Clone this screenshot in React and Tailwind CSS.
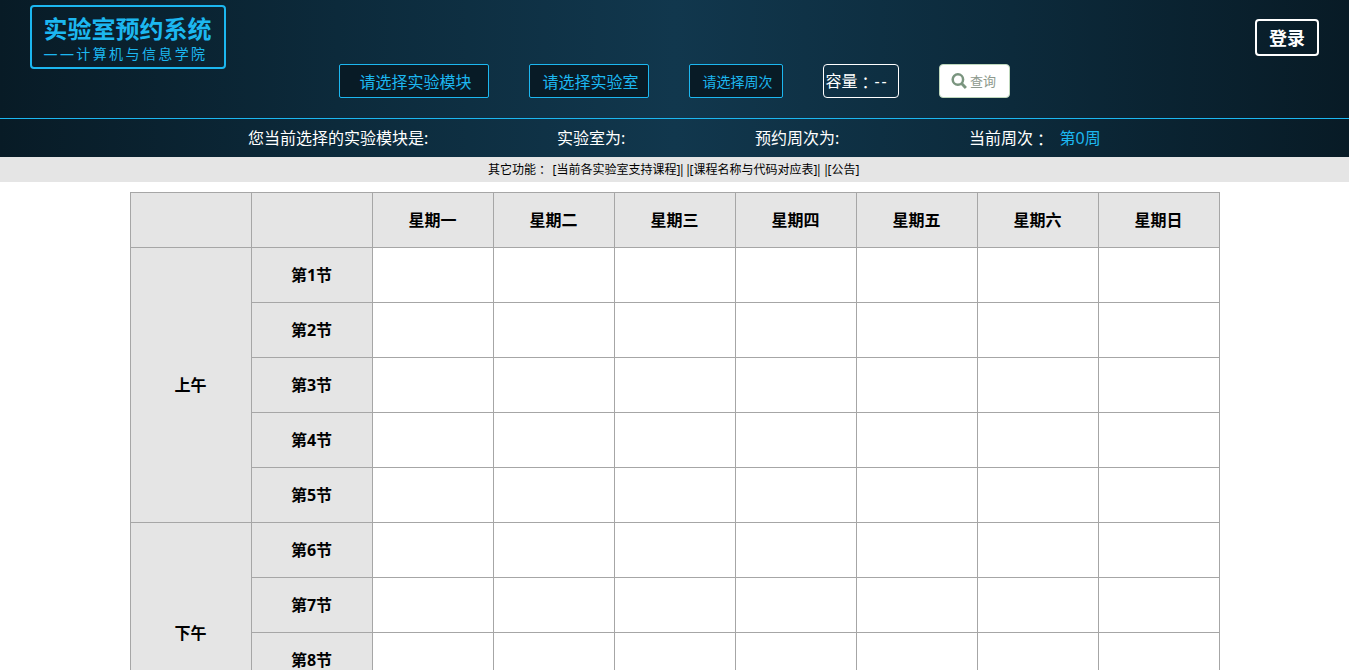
const DAYS = ['星期一', '星期二', '星期三', '星期四', '星期五', '星期六', '星期日'];

const SESSIONS = [
  { name: '上午', periods: [1, 2, 3, 4, 5] },
  { name: '下午', periods: [6, 7, 8, 9] },
];

function Colon() {
  return (
    <span className="inline-block translate-y-[0.12em] font-['Noto_Sans_CJK_TC',sans-serif] leading-none">：</span>
  );
}

function Bar() {
  return <span className="inline-flex w-[3px] justify-center">|</span>;
}

function SearchIcon() {
  return (
    <svg viewBox="0 0 16 16" className="mr-[3px] h-4 w-4 shrink-0" fill="none" stroke="#7a957f">
      <circle cx="6.9" cy="6.5" r="5.2" strokeWidth="2.5" />
      <path d="M10.6 10.4 L14.9 14.9" strokeWidth="2.9" />
    </svg>
  );
}

function Header() {
  return (
    <div className="h-[118px]">
      <div className="flex h-16 items-start justify-between pl-[30px] pr-[30px]">
        <div className="mt-[5px] h-16 w-[196px] rounded-[4px] border-2 border-[#1cb7f0] pl-[11.5px] pt-1.5 text-[#1cb7f0]">
          <div className="h-[31px] whitespace-nowrap text-2xl leading-8 font-bold">实验室预约系统</div>
          <div className="h-5 whitespace-nowrap text-sm leading-5 tracking-[2.4px]">——计算机与信息学院</div>
        </div>
        <button className="mt-[19px] flex h-[37px] w-16 items-center justify-center rounded-[4px] border-2 border-white text-lg font-bold text-white">
          登录
        </button>
      </div>
      <div className="flex h-[34px] justify-center gap-10 whitespace-nowrap text-base">
        <button className="flex h-[34px] w-[150px] items-center justify-center rounded-[2px] border border-[#1cb7f0] bg-[#081b26] pl-[3px] pt-px text-[#1cb7f0]">
          请选择实验模块
        </button>
        <button className="flex h-[34px] w-[120px] items-center justify-center rounded-[2px] border border-[#1cb7f0] bg-[#081b26] pl-[3px] pt-px text-[#1cb7f0]">
          请选择实验室
        </button>
        <button className="flex h-[34px] w-[94px] items-center justify-center rounded-[2px] border border-[#1cb7f0] bg-[#081b26] pl-[3px] pt-0.5 text-sm text-[#1cb7f0]">
          请选择周次
        </button>
        <div className="flex h-[34px] w-[76px] items-center rounded-[4px] border border-white pl-[1.5px] text-white">
          <span>容量<Colon /></span>
          <span className="pl-px tracking-[1.8px]">--</span>
        </div>
        <button className="flex h-[34px] w-[71px] items-center rounded-[4px] border border-[#bfd8bc] bg-white pl-[11px] text-[13px] text-[#8d998d]">
          <SearchIcon />
          <span className="pt-0.5">查询</span>
        </button>
      </div>
    </div>
  );
}

function StatusBar() {
  return (
    <div className="flex h-[39px] items-center whitespace-nowrap border-t border-[#1cb7f0] pl-[248px] text-base text-white">
      <div className="w-[309px]">您当前选择的实验模块是:</div>
      <div className="w-[198px]">实验室为:</div>
      <div className="w-[214px]">预约周次为:</div>
      <div className="flex">
        <span className="w-[90.5px]">当前周次<Colon /></span>
        <span className="text-[#1cb7f0]">第0周</span>
      </div>
    </div>
  );
}

function Links() {
  return (
    <div className="flex h-[25px] items-center whitespace-nowrap bg-[#e5e5e5] pl-[488px] pt-px text-xs text-black">
      <span className="w-[64.5px]">其它功能<Colon /></span>
      <span className="w-[134px]">[当前各实验室支持课程]<Bar /></span>
      <span className="w-[138px]"><Bar />[课程名称与代码对应表]<Bar /></span>
      <span><Bar />[公告]</span>
    </div>
  );
}

function Timetable() {
  return (
    <table className="mx-auto mt-2.5 w-[1090px] table-fixed border-collapse text-center text-base font-bold text-black">
      <thead>
        <tr className="h-[55px] bg-[#e5e5e5]">
          <th className="border border-[#a6a6a6] p-0" />
          <th className="border border-[#a6a6a6] p-0" />
          {DAYS.map((day) => (
            <th key={day} className="border border-[#a6a6a6] p-0">{day}</th>
          ))}
        </tr>
      </thead>
      <tbody>
        {SESSIONS.map((session) =>
          session.periods.map((period, i) => (
            <tr key={period} className="h-[55px]">
              {i === 0 && (
                <th rowSpan={session.periods.length} className="border border-[#a6a6a6] bg-[#e5e5e5] p-0">
                  {session.name}
                </th>
              )}
              <th className="border border-[#a6a6a6] bg-[#e5e5e5] p-0">第{period}节</th>
              {DAYS.map((day) => (
                <td key={day} className="border border-[#a6a6a6] p-0" />
              ))}
            </tr>
          ))
        )}
      </tbody>
    </table>
  );
}

export default function App() {
  return (
    <div className="h-screen overflow-hidden bg-white font-['Noto_Sans','Noto_Sans_CJK_SC',sans-serif]">
      <div className="bg-[linear-gradient(to_right,#081b26,#0c2a3b_25%,#11374d_50%,#0c2a3b_75%,#081b26)]">
        <Header />
        <StatusBar />
      </div>
      <Links />
      <Timetable />
    </div>
  );
}
